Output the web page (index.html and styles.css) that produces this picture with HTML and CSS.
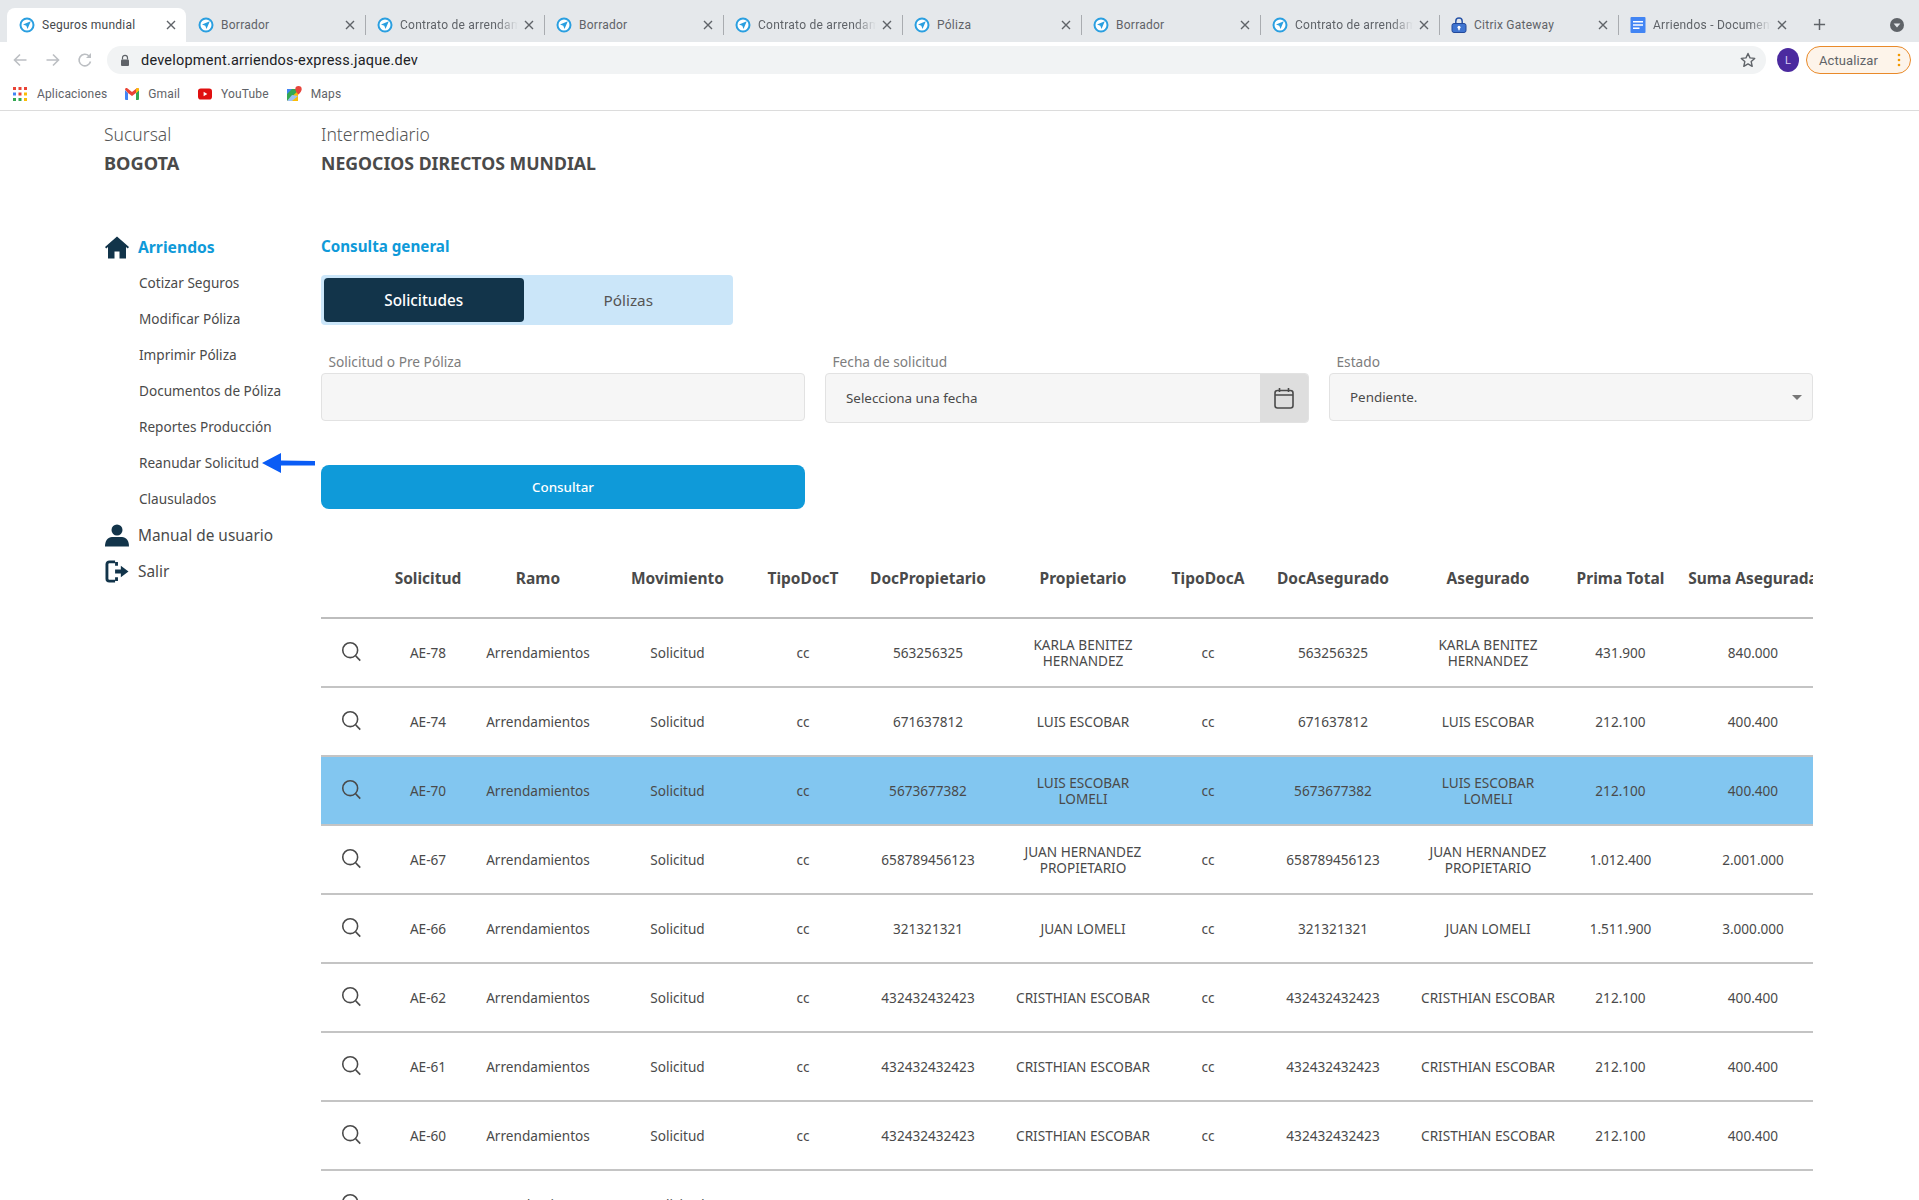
FILE: index.html
```html
<!DOCTYPE html>
<html lang="es">
<head>
<meta charset="utf-8">
<title>Seguros mundial</title>
<link rel="stylesheet" href="styles.css">
</head>
<body>
<svg class="defs" width="0" height="0" aria-hidden="true">
  <symbol id="fav" viewBox="0 0 16 16">
    <circle cx="8" cy="8" r="6.5" fill="#fff" stroke="#2a9fe0" stroke-width="2"/>
    <path d="M11.800 4.200 4 7.500l3.300 1.200 1.200 3.300z" fill="#2a9fe0"/>
  </symbol>
  <symbol id="x" viewBox="0 0 10 10">
    <path d="M1 1l8 8M9 1 1 9" stroke="#5f6368" stroke-width="1.4" fill="none"/>
  </symbol>
  <symbol id="lens" viewBox="0 0 24 24">
    <circle cx="10.500" cy="10.500" r="8.500" fill="none" stroke="#4a4a4a" stroke-width="1.800"/>
    <path d="m16.800 17 5.200 5.400" stroke="#4a4a4a" stroke-width="1.800" fill="none"/>
  </symbol>
</svg>

<header class="chrome">
  <div class="tabstrip">
    <div class="tab active"><svg class="fav"><use href="#fav"/></svg><span class="tab-title">Seguros mundial</span><svg class="tab-x"><use href="#x"/></svg></div>
    <div class="tab nosep"><svg class="fav"><use href="#fav"/></svg><span class="tab-title">Borrador</span><svg class="tab-x"><use href="#x"/></svg></div>
    <div class="tab"><svg class="fav"><use href="#fav"/></svg><span class="tab-title fade">Contrato de arrendamiento</span><svg class="tab-x"><use href="#x"/></svg></div>
    <div class="tab"><svg class="fav"><use href="#fav"/></svg><span class="tab-title">Borrador</span><svg class="tab-x"><use href="#x"/></svg></div>
    <div class="tab"><svg class="fav"><use href="#fav"/></svg><span class="tab-title fade">Contrato de arrendamiento</span><svg class="tab-x"><use href="#x"/></svg></div>
    <div class="tab"><svg class="fav"><use href="#fav"/></svg><span class="tab-title">Póliza</span><svg class="tab-x"><use href="#x"/></svg></div>
    <div class="tab"><svg class="fav"><use href="#fav"/></svg><span class="tab-title">Borrador</span><svg class="tab-x"><use href="#x"/></svg></div>
    <div class="tab"><svg class="fav"><use href="#fav"/></svg><span class="tab-title fade">Contrato de arrendamiento</span><svg class="tab-x"><use href="#x"/></svg></div>
    <div class="tab">
      <svg class="fav" viewBox="0 0 16 16"><path d="M4.800 7V4.200a3.200 3.200 0 0 1 6.400 0V7" fill="none" stroke="#2a55a8" stroke-width="1.500"/><rect x="1" y="6.500" width="14" height="9" rx="2" fill="#3f74d0" stroke="#23499a" stroke-width="1"/><circle cx="8" cy="10.300" r="1.500" fill="#fff"/><path d="M7.300 10.500h1.400v2.700H7.300z" fill="#fff"/></svg>
      <span class="tab-title">Citrix Gateway</span><svg class="tab-x"><use href="#x"/></svg></div>
    <div class="tab">
      <svg class="fav" viewBox="0 0 16 16"><rect x="0.500" width="15" height="16" rx="1" fill="#4285f4"/><path d="M3 4h10v1.400H3zM3 7.300h10v1.400H3zM3 10.600h6.500V12H3z" fill="#fff"/></svg>
      <span class="tab-title fade">Arriendos - Documentos</span><svg class="tab-x"><use href="#x"/></svg></div>
    <svg class="newtab" viewBox="0 0 14 14"><path d="M7 1v12M1 7h12" stroke="#5f6368" stroke-width="1.600"/></svg>
    <svg class="tabmenu" viewBox="0 0 14 14"><circle cx="7" cy="7" r="7" fill="#5f6368"/><path d="M3.600 5.400h6.800L7 9.600z" fill="#e5e8eb"/></svg>
  </div>
  <div class="toolbar">
    <svg class="nav-ic back" viewBox="0 0 16 16"><path d="M14.500 8H2.500M8 2.500 2.500 8 8 13.500" fill="none" stroke="#bcbfc3" stroke-width="1.600"/></svg>
    <svg class="nav-ic fwd" viewBox="0 0 16 16"><path d="M1.500 8h12M8 2.500 13.500 8 8 13.500" fill="none" stroke="#bcbfc3" stroke-width="1.600"/></svg>
    <svg class="nav-ic reload" viewBox="0 0 16 16"><path d="M13.500 9.500A5.800 5.800 0 1 1 12 4" fill="none" stroke="#bcbfc3" stroke-width="1.600"/><path d="M14 1v5H9z" fill="#bcbfc3"/></svg>
    <div class="omnibox">
      <svg class="lock" viewBox="0 0 10 12"><path d="M2.500 5V3.300a2.500 2.500 0 0 1 5 0V5" fill="none" stroke="#5f6368" stroke-width="1.200"/><rect x="1" y="5" width="8" height="6.500" rx="1" fill="#5f6368"/></svg>
      <span class="url">development.arriendos-express.jaque.dev</span>
      <svg class="star" viewBox="0 0 16 16"><path d="m8 1.500 2 4.400 4.700.5-3.500 3.200 1 4.700L8 11.900l-4.200 2.400 1-4.700L1.300 6.400 6 5.900z" fill="none" stroke="#5f6368" stroke-width="1.400" stroke-linejoin="round"/></svg>
    </div>
    <span class="avatar">L</span>
    <span class="update"><span>Actualizar</span><svg class="dots" viewBox="0 0 4 14"><circle cx="2" cy="2" r="1.300"/><circle cx="2" cy="7" r="1.300"/><circle cx="2" cy="12" r="1.300"/></svg></span>
  </div>
  <div class="bookmarks">
    <span class="bm bm-apps">
      <svg class="bm-ic" viewBox="0 0 14 14"><g fill="#ea4335"><path d="M0 0h3v3H0zM5.500 0h3v3h-3zM11 0h3v3h-3z"/></g><g fill="#4285f4"><path d="M0 5.500h3v3H0z"/></g><path d="M5.500 5.500h3v3h-3z" fill="#ea4335"/><path d="M11 5.500h3v3h-3z" fill="#fbbc05"/><path d="M0 11h3v3H0zM5.500 11h3v3h-3z" fill="#34a853"/><path d="M11 11h3v3h-3z" fill="#fbbc05"/></svg>Aplicaciones</span>
    <span class="bm bm-gmail">
      <svg class="bm-ic" viewBox="0 0 14 12"><path d="M0 2v9a1 1 0 0 0 1 1h2V5z" fill="#4285f4"/><path d="M14 2v9a1 1 0 0 1-1 1h-2V5z" fill="#34a853"/><path d="M0 1.500C0 .3 1.300-.4 2.300.3L7 4l4.700-3.700c1-.7 2.300 0 2.300 1.200L11 5 7 8 3 5z" fill="#ea4335"/><path d="M11 1v4l3-2.400v-1C14 .3 12.700-.4 11.700.3z" fill="#fbbc05"/></svg>Gmail</span>
    <span class="bm bm-yt">
      <svg class="bm-ic" viewBox="0 0 15 12"><rect width="15" height="12" rx="3" fill="#e01010"/><path d="m6 3.500 4 2.500-4 2.500z" fill="#fff"/></svg>YouTube</span>
    <span class="bm">
      <svg class="bm-ic tall" viewBox="0 0 15 15"><path d="M0 3h11v12H0z" fill="#34a853"/><path d="M0 15 11 5v10z" fill="#fbbc05"/><path d="M0 3h5L0 8z" fill="#4285f4"/><path d="M5 9 0 15h5l6-5z" fill="#9cc2f5"/><path d="M11.500 0a3.200 3.200 0 0 0-3.200 3.200c0 2.200 3.200 5.300 3.200 5.300s3.200-3.100 3.200-5.300A3.200 3.200 0 0 0 11.500 0z" fill="#e8453c"/></svg>Maps</span>
  </div>
</header>

<div class="page">
  <aside class="side">
    <div class="meta">
      <div class="meta-label">Sucursal</div>
      <div class="meta-value">BOGOTA</div>
    </div>
    <nav class="nav">
      <a class="nav-top current">
        <svg class="nav-svg" viewBox="0 0 24 22"><path d="M12 0 0 10.500 1.200 12 3 10.500V22h6.500v-7h5v7H21V10.500l1.800 1.500L24 10.500z" fill="#12344a"/></svg>Arriendos</a>
      <a class="nav-sub">Cotizar Seguros</a>
      <a class="nav-sub">Modificar Póliza</a>
      <a class="nav-sub">Imprimir Póliza</a>
      <a class="nav-sub">Documentos de Póliza</a>
      <a class="nav-sub">Reportes Producción</a>
      <a class="nav-sub">Reanudar Solicitud
        <svg class="pointer" viewBox="0 0 53 20"><path d="M0 10 19 0v7.500l34 .5v4.500L19 12.500V20z" fill="#0a5cf5"/></svg></a>
      <a class="nav-sub">Clausulados</a>
      <a class="nav-top">
        <svg class="nav-svg" viewBox="0 0 24 22"><circle cx="12" cy="5.500" r="5.500" fill="#12344a"/><path d="M0 22c0-6 3-9.500 7-9.500h10c4 0 7 3.500 7 9.500z" fill="#12344a"/></svg>Manual de usuario</a>
      <a class="nav-top">
        <svg class="nav-svg" viewBox="0 0 24 24"><path d="M10 2H4a2.500 2.500 0 0 0-2.500 2.500v15A2.500 2.500 0 0 0 4 22h6" fill="none" stroke="#12344a" stroke-width="3"/><path d="M10 2h3v4h-3zM10 18h3v4h-3z" fill="#12344a"/><path d="M10 9.800h6V6l8 6-8 6v-3.800h-6z" fill="#12344a"/></svg>Salir</a>
    </nav>
  </aside>

  <main class="main">
    <div class="meta">
      <div class="meta-label">Intermediario</div>
      <div class="meta-value">NEGOCIOS DIRECTOS MUNDIAL</div>
    </div>
    <h2 class="section-title">Consulta general</h2>
    <div class="segmented">
      <span class="seg on">Solicitudes</span>
      <span class="seg">Pólizas</span>
    </div>
    <div class="filters">
      <div class="field">
        <div class="field-label">Solicitud o Pre Póliza</div>
        <div class="input"></div>
      </div>
      <div class="field">
        <div class="field-label">Fecha de solicitud</div>
        <div class="input date">
          <span class="input-text">Selecciona una fecha</span>
          <span class="addon"><svg class="cal" viewBox="0 0 20 22"><rect x="1" y="3.500" width="18" height="17.500" rx="2.500" fill="none" stroke="#4a4a4a" stroke-width="1.600"/><path d="M1 8h18M5.500 1v4M14.500 1v4" fill="none" stroke="#4a4a4a" stroke-width="1.600"/></svg></span>
        </div>
      </div>
      <div class="field">
        <div class="field-label">Estado</div>
        <div class="input select">
          <span class="input-text">Pendiente.</span>
          <span class="caret"></span>
        </div>
      </div>
    </div>
    <button class="primary" type="button">Consultar</button>

    <div class="table-clip">
      <table class="grid">
        <colgroup>
          <col class="c-a"><col class="c-b"><col class="c-c"><col class="c-d"><col class="c-e"><col class="c-f"><col class="c-g"><col class="c-h"><col class="c-f2"><col class="c-i"><col class="c-j"><col class="c-k">
        </colgroup>
        <thead>
          <tr><th></th><th>Solicitud</th><th>Ramo</th><th>Movimiento</th><th>TipoDocT</th><th>DocPropietario</th><th>Propietario</th><th>TipoDocA</th><th>DocAsegurado</th><th>Asegurado</th><th>Prima Total</th><th>Suma Asegurada</th></tr>
        </thead>
        <tbody>
          <tr><td><svg class="lens"><use href="#lens"/></svg></td><td>AE-78</td><td>Arrendamientos</td><td>Solicitud</td><td>cc</td><td>563256325</td><td>KARLA BENITEZ HERNANDEZ</td><td>cc</td><td>563256325</td><td>KARLA BENITEZ HERNANDEZ</td><td>431.900</td><td>840.000</td></tr>
          <tr><td><svg class="lens"><use href="#lens"/></svg></td><td>AE-74</td><td>Arrendamientos</td><td>Solicitud</td><td>cc</td><td>671637812</td><td>LUIS ESCOBAR</td><td>cc</td><td>671637812</td><td>LUIS ESCOBAR</td><td>212.100</td><td>400.400</td></tr>
          <tr class="selected"><td><svg class="lens"><use href="#lens"/></svg></td><td>AE-70</td><td>Arrendamientos</td><td>Solicitud</td><td>cc</td><td>5673677382</td><td>LUIS ESCOBAR LOMELI</td><td>cc</td><td>5673677382</td><td>LUIS ESCOBAR LOMELI</td><td>212.100</td><td>400.400</td></tr>
          <tr><td><svg class="lens"><use href="#lens"/></svg></td><td>AE-67</td><td>Arrendamientos</td><td>Solicitud</td><td>cc</td><td>658789456123</td><td>JUAN HERNANDEZ PROPIETARIO</td><td>cc</td><td>658789456123</td><td>JUAN HERNANDEZ PROPIETARIO</td><td>1.012.400</td><td>2.001.000</td></tr>
          <tr><td><svg class="lens"><use href="#lens"/></svg></td><td>AE-66</td><td>Arrendamientos</td><td>Solicitud</td><td>cc</td><td>321321321</td><td>JUAN LOMELI</td><td>cc</td><td>321321321</td><td>JUAN LOMELI</td><td>1.511.900</td><td>3.000.000</td></tr>
          <tr><td><svg class="lens"><use href="#lens"/></svg></td><td>AE-62</td><td>Arrendamientos</td><td>Solicitud</td><td>cc</td><td>432432432423</td><td>CRISTHIAN ESCOBAR</td><td>cc</td><td>432432432423</td><td>CRISTHIAN ESCOBAR</td><td>212.100</td><td>400.400</td></tr>
          <tr><td><svg class="lens"><use href="#lens"/></svg></td><td>AE-61</td><td>Arrendamientos</td><td>Solicitud</td><td>cc</td><td>432432432423</td><td>CRISTHIAN ESCOBAR</td><td>cc</td><td>432432432423</td><td>CRISTHIAN ESCOBAR</td><td>212.100</td><td>400.400</td></tr>
          <tr><td><svg class="lens"><use href="#lens"/></svg></td><td>AE-60</td><td>Arrendamientos</td><td>Solicitud</td><td>cc</td><td>432432432423</td><td>CRISTHIAN ESCOBAR</td><td>cc</td><td>432432432423</td><td>CRISTHIAN ESCOBAR</td><td>212.100</td><td>400.400</td></tr>
          <tr><td><svg class="lens"><use href="#lens"/></svg></td><td>AE-59</td><td>Arrendamientos</td><td>Solicitud</td><td>cc</td><td>432432432423</td><td>CRISTHIAN ESCOBAR</td><td>cc</td><td>432432432423</td><td>CRISTHIAN ESCOBAR</td><td>212.100</td><td>400.400</td></tr>
        </tbody>
      </table>
    </div>
  </main>
</div>
</body>
</html>
```
FILE: styles.css
```css
* { box-sizing: border-box; }
html, body { margin: 0; height: 1200px; overflow: hidden; background: #fff; }
body { font-family: "Noto Sans", "Open Sans", sans-serif; color: #4a4a4a; }
.defs { position: absolute; }

/* browser chrome */
.chrome { font-family: Roboto, "Liberation Sans", sans-serif; }
.tabstrip { height: 42px; background: #e5e8eb; display: flex; align-items: flex-end; padding-left: 7px; position: relative; }
.tab { width: 179px; height: 34px; display: flex; align-items: center; padding: 0 10px 1px 12px; position: relative; font-size: 12px; color: #5f6368; border-left: 1px solid transparent; }
.tab::before { content: ""; position: absolute; left: -1px; top: 7px; height: 20px; width: 1px; background: #a9acb0; }
.tab:first-child::before, .tab.nosep::before { display: none; }
.tab.active { background: #fff; border-radius: 8px 8px 0 0; color: #45484c; }
.fav { width: 16px; height: 16px; flex: none; margin: 0 7px 0 -1px; }
.tab-title { flex: 1; white-space: nowrap; overflow: hidden; letter-spacing: .25px; }
.tab-title.fade { -webkit-mask-image: linear-gradient(90deg, #000 82%, transparent 100%); mask-image: linear-gradient(90deg, #000 82%, transparent 100%); }
.tab-x { width: 10px; height: 10px; flex: none; margin-left: 6px; }
.newtab { width: 13px; height: 13px; margin: 0 0 11px 16px; flex: none; }
.tabmenu { width: 14px; height: 14px; position: absolute; left: 1890px; top: 18px; }

.toolbar { height: 36px; display: flex; align-items: center; padding: 4px 8px 4px 0; background: #fff; }
.nav-ic { width: 16px; height: 16px; flex: none; }
.back { margin-left: 12px; }
.fwd { margin-left: 17px; }
.reload { margin-left: 16px; }
.omnibox { width: 1659px; height: 28px; margin-left: 14px; flex: none; background: #f1f3f4; border-radius: 14px; display: flex; align-items: center; padding: 0 10px 0 14px; font-size: 14.5px; color: #202124; }
.lock { width: 10px; height: 13px; flex: none; margin-right: 11px; margin-left: -1px; }
.url { flex: 1; letter-spacing: .22px; }
.star { width: 16px; height: 16px; flex: none; }
.avatar { width: 22px; height: 24px; margin-left: 11px; flex: none; border-radius: 50%; background: #4b2a9f; color: #d8cdf2; font-size: 11px; display: flex; align-items: center; justify-content: center; }
.update { width: 105px; height: 28px; margin-left: 7px; flex: none; border: 1.5px solid #e98a2a; background: #fdf4ea; border-radius: 14px; display: flex; align-items: center; justify-content: space-between; padding: 0 9px 0 12px; font-size: 13px; color: #5f6368; letter-spacing: .1px; }
.dots { width: 4px; height: 14px; fill: #f29900; }

.bookmarks { height: 33px; display: flex; align-items: center; padding: 0 0 1px 13px; gap: 18px; font-size: 12px; color: #5f6368; border-bottom: 1px solid #dcdcdc; letter-spacing: .15px; }
.bm { display: flex; align-items: center; gap: 9px; }
.bm-apps { gap: 10px; }
.bm-ic { width: 14px; height: 12px; flex: none; }
.bm-apps .bm-ic { height: 14px; }
.bm-ic.tall { width: 15px; height: 15px; }

/* page */
.page { display: flex; padding-left: 104px; height: 1090px; overflow: hidden; }
.side { width: 217px; flex: none; }
.main { width: 1492px; flex: none; }
.meta { padding-top: 11px; height: 64px; }
.meta-label { font-size: 17.5px; line-height: 24px; font-weight: 300; color: #555; }
.meta-value { font-size: 17.7px; line-height: 24px; font-weight: 700; margin-top: 5px; color: #4a4a4a; white-space: nowrap; }
.side .meta-value { font-size: 18.2px; }

.nav { margin-top: 54px; }
.nav-top, .nav-sub { display: flex; align-items: center; height: 36px; white-space: nowrap; }
.nav-top { font-size: 15.4px; gap: 10px; color: #4a4a4a; }
.nav-top.current { color: #0f9ad9; font-weight: 700; font-size: 15.7px; }
.nav-sub { font-size: 13.6px; padding-left: 35px; padding-bottom: 1px; gap: 5px; color: #4a4a4a; }
.nav-svg { width: 24px; height: 23px; flex: none; margin-left: 1px; margin-right: -1px; }
.pointer { width: 53px; height: 20px; flex: none; margin-left: -2px; }

.section-title { margin: 59px 0 17px; font-size: 15.2px; line-height: 24px; font-weight: 700; color: #0f9ad9; }
.segmented { width: 412px; height: 50px; background: #cbe6f9; border-radius: 4px; padding: 3px 0 3px 3px; display: flex; }
.seg { width: 200px; height: 44px; display: flex; align-items: center; justify-content: center; font-size: 15.3px; color: #555; }
.seg + .seg { width: 210px; }
.seg.on { background: #12344a; color: #fff; border-radius: 4px; font-weight: 500; }

.filters { display: grid; grid-template-columns: repeat(3, 484px); column-gap: 20px; margin-top: 28px; }
.field-label { font-size: 13.7px; line-height: 18px; padding-left: 7.500px; margin-bottom: 2px; color: #7d7d7d; }
.input { height: 48px; background: #f6f6f6; border: 1px solid #e2e2e2; border-radius: 4px; display: flex; align-items: center; font-size: 13.4px; color: #4a4a4a; }
.input.date { height: 50px; padding-left: 20px; overflow: hidden; }
.input.select { padding: 0 10px 0 20px; }
.input-text { flex: 1; padding-bottom: 1px; }
.addon { width: 48px; height: 100%; background: #dedede; display: flex; align-items: center; justify-content: center; }
.cal { width: 20px; height: 22px; }
.caret { width: 0; height: 0; border-left: 5px solid transparent; border-right: 5px solid transparent; border-top: 5px solid #777; }

.primary { display: block; width: 484px; height: 44px; margin-top: 42px; padding-bottom: 2px; background: #0f9ad9; border: 0; border-radius: 8px; color: #fff; font: 500 13.4px "Noto Sans", sans-serif; }

.table-clip { width: 1492px; margin-top: 30px; overflow: hidden; }
.grid { table-layout: fixed; width: 1508px; border-collapse: separate; border-spacing: 0; }
.c-a { width: 60px; } .c-b { width: 94px; } .c-c { width: 126px; } .c-d { width: 153px; }
.c-e { width: 98px; } .c-f { width: 152px; } .c-g { width: 158px; } .c-h { width: 92px; }
.c-f2 { width: 158px; } .c-i { width: 152px; } .c-j { width: 113px; } .c-k { width: 152px; }
.grid th { height: 80px; font-size: 15.5px; font-weight: 700; text-align: center; white-space: nowrap; border-bottom: 2px solid #bdbdbd; padding: 0; color: #4a4a4a; }
.grid td { height: 69px; font-size: 13.6px; line-height: 16px; text-align: center; padding: 0 7px; border-bottom: 2px solid #c4c4c4; color: #4a4a4a; }
.selected td { background: #82c6f0; }
.lens { width: 21px; height: 21px; display: block; margin: -3px auto 0; }
```
